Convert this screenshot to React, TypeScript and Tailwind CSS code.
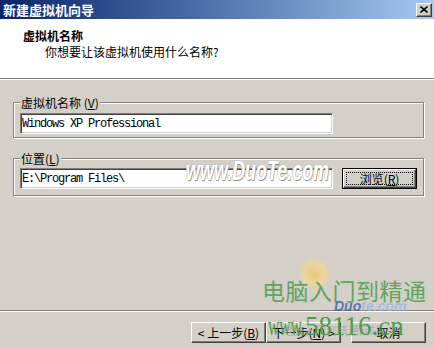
import React from "react";

const raised =
  "border border-t-white border-l-white border-r-[#404040] border-b-[#404040] shadow-[inset_-1px_-1px_0_#808080]";
const sunken =
  "border border-t-[#808080] border-l-[#808080] border-r-white border-b-white shadow-[inset_1px_1px_0_#404040,inset_-1px_-1px_0_#d4d0c8]";

function Mn({ c }: { c: string }) {
  return <span className="underline underline-offset-[1px]">{c}</span>;
}

function Btn({ children, cls = "" }: { children: React.ReactNode; cls?: string }) {
  return (
    <div
      className={`w-[75px] h-[21px] bg-[#d4d0c8] ${raised} flex items-center justify-center leading-[14px] ${cls}`}
    >
      {children}
    </div>
  );
}

export default function App() {
  return (
    <div className="relative w-[434px] h-[348px] overflow-hidden bg-[#d4d0c8] flex flex-col font-['Noto_Sans_CJK_SC',sans-serif] text-[12px] text-black">
      {/* Title bar */}
      <div className="h-[19px] shrink-0 flex items-center justify-between bg-linear-to-r from-[#0a246a] to-[#a6caf0]">
        <span className="pl-[3px] text-white font-bold text-[13px] leading-[19px]">新建虚拟机向导</span>
        <div className={`mr-[2px] w-[16px] h-[14px] bg-[#d4d0c8] ${raised} flex items-center justify-center`}>
          <svg width="8" height="7" viewBox="0 0 8 7">
            <path d="M0.5 0.5 L7.5 6.5 M7.5 0.5 L0.5 6.5" stroke="#000" strokeWidth="1.6" fill="none" />
          </svg>
        </div>
      </div>

      {/* Header */}
      <div className="h-[59px] shrink-0 bg-white pt-[10px]">
        <div className="pl-[23px] font-bold leading-[14px]">虚拟机名称</div>
        <div className="pl-[45px] mt-[2px] leading-[14px]">你想要让该虚拟机使用什么名称?</div>
      </div>
      <div className="h-px shrink-0 bg-[#808080]" />
      <div className="h-px shrink-0 bg-white" />

      {/* Content */}
      <div className="flex-1 flex flex-col pl-[13px] pr-[10px] pt-[22px]">
        <div className="border border-[#808080] shadow-[inset_1px_1px_0_#fff,1px_1px_0_#fff] flex flex-col pb-[3px]">
          <div className="self-start -mt-[7px] ml-[6px] px-[1px] bg-[#d4d0c8] leading-[14px]">
            虚拟机名称 (<Mn c="V" />)
          </div>
          <div
            className={`mt-[3px] ml-[6px] w-[313px] h-[21px] bg-white ${sunken} flex items-center pl-[1px] font-['Liberation_Mono',monospace] text-[12px] tracking-[-1.2px]`}
          >
            Windows XP Professional
          </div>
        </div>

        <div className="mt-[20px] border border-[#808080] shadow-[inset_1px_1px_0_#fff,1px_1px_0_#fff] flex flex-col pb-[6px]">
          <div className="self-start -mt-[7px] ml-[6px] px-[1px] bg-[#d4d0c8] leading-[14px]">
            位置(<Mn c="L" />)
          </div>
          <div className="mt-[2px] ml-[6px] flex items-center gap-[9px]">
            <div
              className={`w-[313px] h-[21px] bg-white ${sunken} flex items-center pl-[1px] font-['Liberation_Mono',monospace] text-[12px] tracking-[-1.2px]`}
            >
              E:\Program Files\
            </div>
            <div className="w-[75px] h-[21px] border border-black">
              <div className={`w-full h-full bg-[#d4d0c8] ${raised} p-[2px]`}>
                <div className="w-full h-full border border-dotted border-black flex items-center justify-center leading-[14px]">
                  浏览(<Mn c="R" />)
                </div>
              </div>
            </div>
          </div>
        </div>

        <div className="flex-1" />
      </div>

      {/* Bottom */}
      <div className="h-px shrink-0 bg-[#808080]" />
      <div className="h-px shrink-0 bg-white" />
      <div className="shrink-0 h-[36px] pt-[10px] pr-[8px] flex justify-end">
        <Btn>
          &lt; 上一步(<Mn c="B" />)
        </Btn>
        <Btn>
          下一步(<Mn c="N" />) &gt;
        </Btn>
        <Btn cls="ml-[10px]">取消</Btn>
      </div>

      {/* Watermarks (overlay) */}
      <div className="pointer-events-none absolute left-[186px] top-[156px] origin-left scale-x-[0.64] font-['Liberation_Sans',sans-serif] font-bold italic text-[28px] leading-[30px] text-white [text-shadow:1px_1px_1px_#8a8a8a,-1px_-1px_0_#c8c8c8] whitespace-nowrap">
        www.DuoTe.com
      </div>
      <div className="pointer-events-none absolute left-[298px] top-[258px] w-[32px] h-[32px] rounded-full bg-[radial-gradient(circle,#f3c25a_0%,#f6d88a_45%,rgba(212,208,200,0)_75%)] opacity-70" />
      <div className="pointer-events-none absolute left-[262px] top-[276px] text-[23px] leading-[28px] tracking-[0.5px] text-[#55a055] opacity-90 whitespace-nowrap">
        电脑入门到精通
      </div>
      <div className="pointer-events-none absolute left-[334px] top-[299px] font-['Liberation_Sans',sans-serif] font-bold italic text-[14px] leading-[14px] whitespace-nowrap opacity-80">
        <span className="text-[#3d5fae]">Duo</span>
        <span className="text-[#9fb7df]">te.com</span>
      </div>
      <div className="pointer-events-none absolute left-[282px] top-[324px] text-[11px] leading-[12px] text-[#a9a9a9] opacity-80 whitespace-nowrap">
        电脑入门到精通网站
      </div>
      <div className="pointer-events-none absolute left-[268px] top-[312px] origin-left scale-x-[0.58] font-['Liberation_Serif',serif] text-[27px] leading-[28px] text-[#3f983f] opacity-90 whitespace-nowrap">
        www.
      </div>
      <div className="pointer-events-none absolute left-[305px] top-[312px] font-['Liberation_Serif',serif] text-[27px] leading-[28px] text-[#3f983f] opacity-90 whitespace-nowrap">
        58116.cn
      </div>
    </div>
  );
}
